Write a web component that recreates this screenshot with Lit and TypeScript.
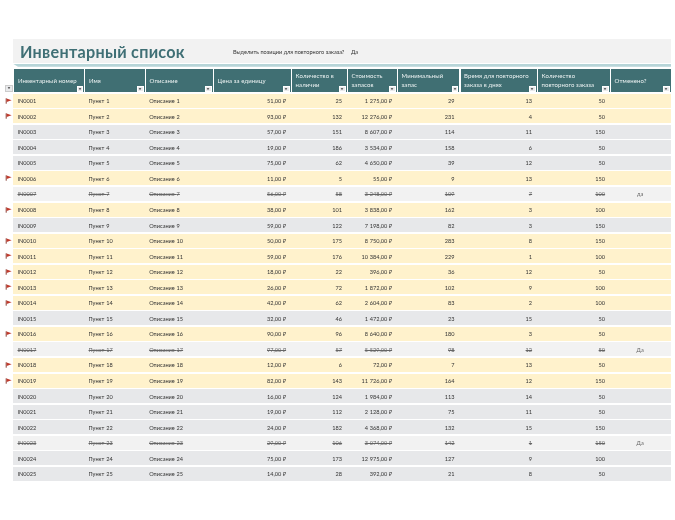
import { LitElement, html, css, svg } from "lit";
import { customElement } from "lit/decorators.js";

const RAW: (number | string)[][] = [
  [51,25,29,13,50],[93,132,231,4,50],[57,151,114,11,150],[19,186,158,6,50],[75,62,39,12,50],
  [11,5,9,13,150],[56,58,109,7,100,"да"],[38,101,162,3,100],[59,122,82,3,150],[50,175,283,8,150],
  [59,176,229,1,100],[18,22,36,12,50],[26,72,102,9,100],[42,62,83,2,100],[32,46,23,15,50],
  [90,96,180,3,50],[97,57,98,12,50,"Да"],[12,6,7,13,50],[82,143,164,12,150],[16,124,113,14,50],
  [19,112,75,11,50],[24,182,132,15,150],[29,106,142,1,150,"Да"],[75,173,127,9,100],[14,28,21,8,50],
];

const FLAGGED = new Set([1,2,6,8,10,11,12,13,14,16,18,19]);
const HEADERS = [
  "Инвентарный номер","Имя","Описание","Цена за единицу","Количество в наличии","Стоимость запасов",
  "Минимальный запас","Время для повторного заказа в днях","Количество повторного заказа","Отменено?",
];

const money = (n: number) =>
  String(n).replace(/\B(?=(\d{3})+$)/g, "\u00a0") + ",00\u00a0₽";

const filterBtn = html`<span class="fb"><svg viewBox="0 0 6 6" width="4" height="4">${svg`<path d="M1 2h4L3 4.6z" fill="#333"/>`}</svg></span>`;
const flag = html`<svg class="flag" viewBox="0 0 7 6" width="7" height="6">${svg`<path d="M1.2 .3V5.7" stroke="#7a2a20" stroke-width=".9"/><path d="M1.6 .5L6.6 2.2 1.6 3.9z" fill="#c0392b"/>`}</svg>`;

@customElement("app-root")
export class AppRoot extends LitElement {
  static styles = css`
    :host {
      display: block;
      width: 675px;
      height: 520px;
      box-sizing: border-box;
      padding: 39px 4px 0 5px;
      background: #fff;
      overflow: hidden;
      font-family: Lato, "Open Sans", sans-serif;
      color: #333;
      filter: blur(0.3px);
    }
    .banner {
      margin-left: 8px;
      height: 24px;
      background: #f2f2f2;
      display: flex;
      align-items: center;
      padding-left: 7px;
    }
    .title {
      font-size: 16.2px;
      font-weight: 700;
      letter-spacing: 0.27px;
      color: #3f6f75;
      width: 213px;
      white-space: nowrap;
    }
    .ask { font-size: 5.6px; white-space: nowrap; width: 118px; padding-top: 1px; }
    .ans { font-size: 5.6px; padding-top: 1px; }
    .strip {
      margin: 0.7px 0 2.6px 8px;
      height: 3px;
      background: #b7d5d8;
      clip-path: polygon(0 0, 100% 0, 100% 100%, 5px 100%);
    }
    .row { display: flex; }
    .mark {
      width: 8px;
      flex: none;
      display: flex;
      align-items: center;
    }
    .grid {
      flex: 1;
      display: grid;
      grid-template-columns: 71px 60.7px 68px 78px 56px 50px 62.5px 77.5px 73px 61px;
    }
    .head { height: 23px; margin-bottom: 1.4px; }
    .head .mark { align-items: flex-end; }
    .head .mark .fb { position: static; margin-bottom: 0.5px; width: 7.5px; height: 7px; border-color: #ccc; }
    .hc {
      position: relative;
      margin-left: 1.4px;
      padding: 0 2px 0 3.5px;
      background: #406f73;
      color: #eef4f4;
      font-size: 6px;
      line-height: 8.4px;
      display: flex;
      align-items: center;
      letter-spacing: 0.1px;
    }
    .fb {
      position: absolute;
      right: 1px;
      bottom: 0;
      width: 6.5px;
      height: 6.5px;
      background: #e9eaec;
      border: 0.5px solid #fff;
      box-sizing: border-box;
      display: flex;
      align-items: center;
      justify-content: center;
    }
    .body { display: flex; flex-direction: column; gap: 1.56px; }
    .body .grid {
      height: 14px;
      align-items: center;
      font-size: 5.6px;
      line-height: 13px;
      white-space: nowrap;
      word-spacing: 0.4px;
    }
    .yellow .grid { background: #fff2cc; }
    .gray .grid { background: #e7e8ea; }
    .off .grid { background: #f2f2f2; color: #666; }
    .off .c { text-decoration: line-through; }
    .c { padding-left: 4.5px; }
    .c.r { padding: 0 4.6px 0 0; text-align: right; }
    .c.ctr { padding: 0; text-align: center; text-decoration: none !important; }
    .flag { display: block; margin-left: -0.5px; }
    .handle {
      width: 2px;
      height: 2px;
      margin: -2px 0 0 auto;
      background: #3a55b0;
    }
  `;

  render() {
    return html`
      <div class="banner">
        <div class="title">Инвентарный список</div>
        <div class="ask">Выделить позиции для повторного заказа?</div>
        <div class="ans">Да</div>
      </div>
      <div class="strip"></div>
      <div class="row head">
        <div class="mark">${filterBtn}</div>
        <div class="grid">
          ${HEADERS.map((h) => html`<div class="hc">${h}${filterBtn}</div>`)}
        </div>
      </div>
      <div class="body">
        ${RAW.map((r, i) => {
          const n = i + 1;
          const [price, qty, min, days, reorder] = r as number[];
          const cancelled = r[5] as string | undefined;
          const cls = cancelled ? "off" : FLAGGED.has(n) ? "yellow" : "gray";
          return html`<div class="row ${cls}">
            <div class="mark">${FLAGGED.has(n) ? flag : null}</div>
            <div class="grid">
              <div class="c">IN${String(n).padStart(4, "0")}</div>
              <div class="c">Пункт ${n}</div>
              <div class="c">Описание ${n}</div>
              <div class="c r">${money(price)}</div>
              <div class="c r">${qty}</div>
              <div class="c r">${money(price * qty)}</div>
              <div class="c r">${min}</div>
              <div class="c r">${days}</div>
              <div class="c r">${reorder}</div>
              <div class="c ctr">${cancelled ?? ""}</div>
            </div>
          </div>`;
        })}
      </div>
      <div class="handle"></div>
    `;
  }
}
